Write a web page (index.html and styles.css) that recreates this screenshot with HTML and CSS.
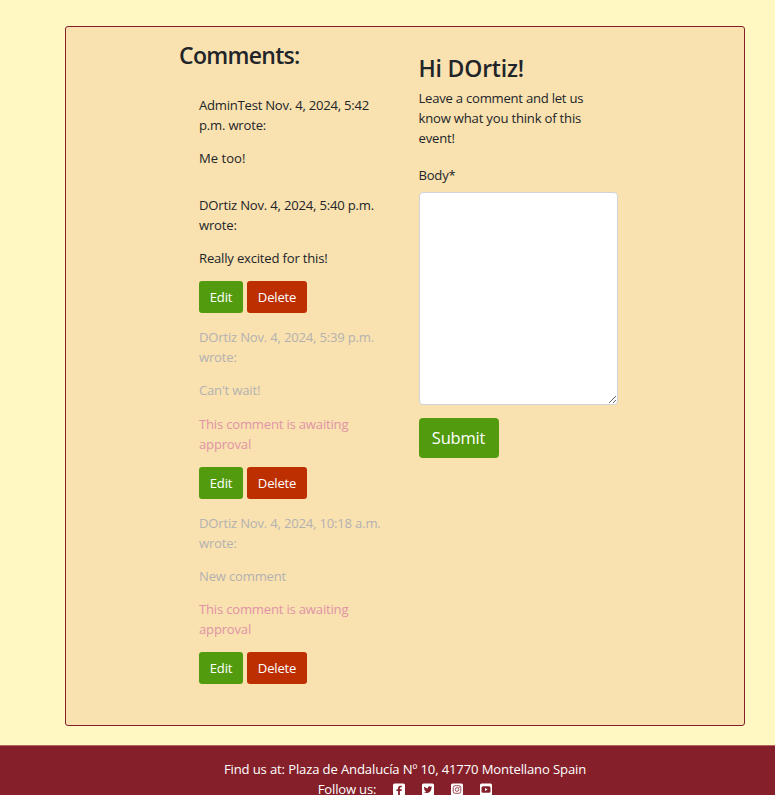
FILE: index.html
```html
<!DOCTYPE html>
<html lang="en">
<head>
<meta charset="utf-8">
<title>Comments</title>
<link rel="stylesheet" href="styles.css">
</head>
<body>
<main class="panel">
  <section class="comments">
    <h3 class="title comments-title">Comments:</h3>
    <div class="list">
      <article class="comment plain">
        <p><span class="tight">AdminTest Nov. 4, 2024, 5:42</span><br>p.m. wrote:</p>
        <p class="loose">Me too!</p>
      </article>
      <article class="comment">
        <p>DOrtiz Nov. 4, 2024, 5:40 p.m.<br>wrote:</p>
        <p>Really excited for this!</p>
        <div class="actions"><button class="btn edit">Edit</button><button class="btn delete">Delete</button></div>
      </article>
      <article class="comment pending">
        <p>DOrtiz Nov. 4, 2024, 5:39 p.m.<br>wrote:</p>
        <p>Can't wait!</p>
        <p class="notice">This comment is awaiting<br>approval</p>
        <div class="actions"><button class="btn edit">Edit</button><button class="btn delete">Delete</button></div>
      </article>
      <article class="comment pending">
        <p>DOrtiz Nov. 4, 2024, 10:18 a.m.<br>wrote:</p>
        <p>New comment</p>
        <p class="notice">This comment is awaiting<br>approval</p>
        <div class="actions"><button class="btn edit">Edit</button><button class="btn delete">Delete</button></div>
      </article>
    </div>
  </section>
  <form class="form">
    <h3 class="title">Hi DOrtiz!</h3>
    <p class="intro"><span class="tight">Leave a comment and let us</span><br>know what you think of this<br>event!</p>
    <label class="label tight" for="body">Body*</label>
    <textarea class="body" id="body"></textarea>
    <button class="submit" type="button">Submit</button>
  </form>
</main>
<footer class="footer">
  <p class="address">Find us at: Plaza de Andalucía Nº 10, 41770 Montellano Spain</p>
  <div class="follow">
    <span class="follow-text">Follow us:</span>
    <svg class="icon" viewBox="0 0 12 13"><rect y=".5" width="12" height="12" rx="1.5" fill="#fff"/><path d="M6.900 12.500V8.100h1.600l.3-1.800H6.900V5.200c0-.6.3-.9.9-.9h1V2.800c-2.400-.5-3.700.4-3.700 2.200v1.300H3.500v1.800h1.600v4.400z" fill="#85202a"/></svg>
    <svg class="icon" viewBox="0 0 12 13"><rect y=".5" width="12" height="12" rx="1.5" fill="#fff"/><path d="M10.300 4 9.500 4.700C9.500 8.300 7 10 4.600 10c-1 0-2-.3-2.800-.8.900.1 1.800-.2 2.400-.7-.8 0-1.400-.5-1.600-1.200h.7c-.8-.2-1.300-.9-1.300-1.700l.7.200C2 5.300 1.800 4.300 2.300 3.500c.9 1.100 2.200 1.700 3.600 1.800C5.600 3.400 7.700 2.600 8.900 3.800L10 3.400l-.6.900z" fill="#85202a"/></svg>
    <svg class="icon" viewBox="0 0 12 13"><rect y=".5" width="12" height="12" rx="1.5" fill="#fff"/><g fill="none" stroke="#85202a" stroke-width=".8"><rect x="2.200" y="2.700" width="7.600" height="7.600" rx="2"/><circle cx="6" cy="6.500" r="1.800"/></g><circle cx="8.200" cy="4.300" r=".5" fill="#85202a"/></svg>
    <svg class="icon" viewBox="0 0 12 13"><rect y=".5" width="12" height="12" rx="1.5" fill="#fff"/><rect x="1.500" y="3.200" width="9" height="6.600" rx="1.600" fill="#85202a"/><path d="m5 5 2.700 1.500L5 8z" fill="#fff"/></svg>
  </div>
</footer>
</body>
</html>
```
FILE: styles.css
```css
* { box-sizing: border-box; }
html { overflow: hidden; }
body {
  margin: 0;
  height: 795px;
  overflow: hidden;
  background: #fff8c2;
  color: #212529;
  font: 13.1px/20px "Open Sans", "Noto Sans", sans-serif;
  letter-spacing: -0.2px;
  white-space: nowrap;
}
p, h3 { margin: 0; }
.panel {
  display: flex;
  width: 680px;
  height: 700px;
  margin: 26px 0 0 65px;
  padding-left: 113px;
  background: #fae1b0;
  border: 1px solid #85202a;
  border-radius: 3px;
}
.comments { width: 239.5px; padding-top: 12px; }
.title { font-size: 23px; line-height: 32px; font-weight: 600; letter-spacing: -0.2px; }
.comments-title { letter-spacing: -0.7px; }
.tight { letter-spacing: -0.24px; }
.loose { letter-spacing: 0; }
.list { padding: 24px 0 0 20px; }
.comment p { margin-bottom: 13.3px; }
.comment { margin-bottom: 13.6px; }
.plain { margin-bottom: 26.6px; }
.pending { color: #b2b2b0; }
.notice { color: #e094a6; }
.actions { display: flex; gap: 4px; }
.btn, .submit {
  border: 0;
  padding: 0;
  color: #fff;
  font: inherit;
  letter-spacing: inherit;
  border-radius: 3px;
}
.btn { height: 32px; }
.edit { width: 44px; background: #529b0e; }
.delete { width: 60px; background: #bd2e00; }
.form { width: 200px; padding-top: 25px; }
.intro { padding-top: 4px; }
.label { display: block; margin: 17px 0 7px; }
.body {
  display: block;
  width: 199px;
  height: 213px;
  background: #fff;
  border: 1px solid #ced4da;
  border-radius: 4px;
  resize: both;
}
.submit {
  width: 80px;
  height: 40px;
  margin-top: 13px;
  font-size: 16.5px;
  background: #529b0e;
  border-radius: 4px;
}
.footer {
  height: 80px;
  margin-top: 19px;
  padding: 13px 0 0 35px;
  background: #85202a;
  border-top: 1px solid #b5655c;
  color: #fff;
  text-align: center;
}
.address { letter-spacing: -0.14px; }
.follow { display: flex; justify-content: center; align-items: center; gap: 17px; }
.icon { width: 12px; height: 13px; }
```
